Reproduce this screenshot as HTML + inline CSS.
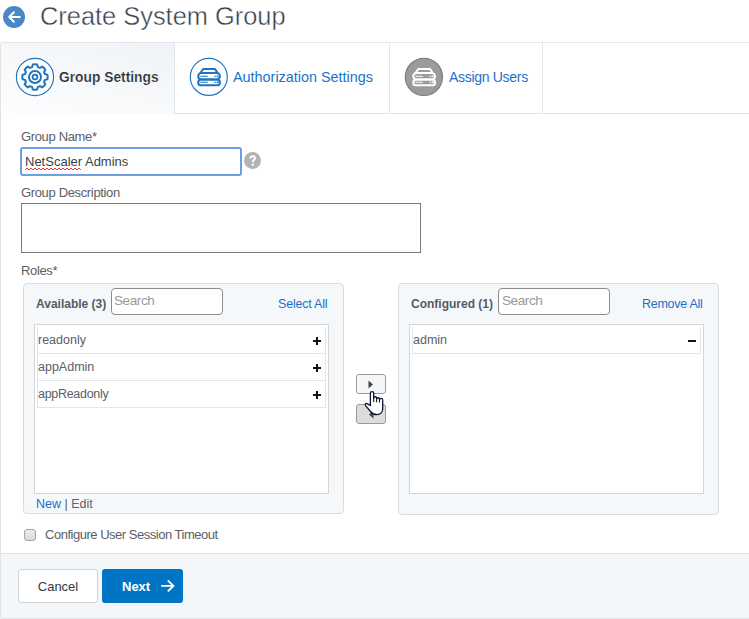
<!DOCTYPE html>
<html><head><meta charset="utf-8">
<style>
*{box-sizing:border-box;}
html,body{margin:0;padding:0;width:749px;height:619px;overflow:hidden;background:#fff;font-family:"Liberation Sans",sans-serif;}
.a{position:absolute;white-space:nowrap;}
#back{left:3px;top:6px;width:22px;height:22px;border-radius:50%;background:#4a87c9;}
#title{left:40px;top:-1px;font-size:25.4px;line-height:34px;color:#343c47;-webkit-text-stroke:0.45px #fff;}
#panel{left:0px;top:42px;width:760px;height:577px;border:1px solid #e3e6ea;border-left-color:#e2e2e2;border-radius:3px 0 0 3px;background:#fff;}
#tab1{left:1px;top:43px;width:173px;height:71px;border-radius:2px 0 0 0;background:linear-gradient(195deg,#eff3f7 0%,#f6f8fa 45%,#fdfdfe 100%);}
.tabline{background:#e1e5ea;}
.lbl{font-size:13px;letter-spacing:-0.35px;color:#5b6066;line-height:16px;}
.link{color:#1c6ec6;}
.circ{border-radius:50%;}
#footer{left:1px;top:553px;width:760px;height:65px;border-radius:0 0 0 2px;background:#f4f7fa;border-top:1px solid #e1e5ea;}
.rpanel{background:#f5f8fb;border:1px solid #d9dbdd;border-radius:4px;}
.list{background:#fff;border:1px solid #d3d5d7;}
.item{border:1px solid #e3e6e9;border-top:none;background:#fff;}
.search{background:#fff;border:1px solid #8c8c8c;border-radius:4px;}
.ph{font-size:13.6px;letter-spacing:-0.45px;color:#9a9a9a;}
.itx{font-size:12.5px;color:#5b6066;}
.hdr{font-size:12px;font-weight:bold;color:#555b62;}
</style></head><body>
<div class="a" id="back">
<svg width="22" height="22" viewBox="0 0 22 22" style="position:absolute;left:0;top:0"><path d="M16.8 11H6.2M10.8 6.3L6.2 11L10.8 15.7" stroke="#fff" stroke-width="2" fill="none" stroke-linecap="round" stroke-linejoin="round"/></svg>
</div>
<div class="a" id="title">Create System Group</div>

<div class="a" id="panel"></div>
<div class="a" id="tab1"></div>
<!-- tab dividers -->
<div class="a tabline" style="left:174px;top:43px;width:1px;height:71px"></div>
<div class="a tabline" style="left:389px;top:43px;width:1px;height:71px"></div>
<div class="a tabline" style="left:542px;top:43px;width:1px;height:71px"></div>
<div class="a tabline" style="left:174px;top:113px;width:575px;height:1px"></div>

<!-- tab1 icon -->
<svg class="a" style="left:14px;top:55px" width="42" height="44" viewBox="0 0 42 44">
 <circle cx="21" cy="22" r="18.6" fill="#fff" stroke="#1f74bf" stroke-width="1.15"/>
 <g transform="translate(21 22)" fill="none" stroke="#1f74bf" stroke-width="2">
  <path d="M-2.87 -9.89L-2.18 -12.51A12.7 12.7 0 0 1 2.18 -12.51L2.87 -9.89A10.3 10.3 0 0 1 4.96 -9.03L7.30 -10.39A12.7 12.7 0 0 1 10.39 -7.30L9.03 -4.96A10.3 10.3 0 0 1 9.89 -2.87L12.51 -2.18A12.7 12.7 0 0 1 12.51 2.18L9.89 2.87A10.3 10.3 0 0 1 9.03 4.96L10.39 7.30A12.7 12.7 0 0 1 7.30 10.39L4.96 9.03A10.3 10.3 0 0 1 2.87 9.89L2.18 12.51A12.7 12.7 0 0 1 -2.18 12.51L-2.87 9.89A10.3 10.3 0 0 1 -4.96 9.03L-7.30 10.39A12.7 12.7 0 0 1 -10.39 7.30L-9.03 4.96A10.3 10.3 0 0 1 -9.89 2.87L-12.51 2.18A12.7 12.7 0 0 1 -12.51 -2.18L-9.89 -2.87A10.3 10.3 0 0 1 -9.03 -4.96L-10.39 -7.30A12.7 12.7 0 0 1 -7.30 -10.39L-4.96 -9.03A10.3 10.3 0 0 1 -2.87 -9.89Z" stroke-linejoin="round"/>
  <circle r="6" />
  <circle r="2.4" stroke-width="1.8"/>
 </g>
</svg>
<div class="a" style="left:59px;top:68px;font-size:13.8px;font-weight:bold;color:#262d36;line-height:20px;-webkit-text-stroke:0.2px #f6f8fa">Group Settings</div>

<!-- tab2 icon -->
<svg class="a" style="left:189px;top:57px" width="40" height="40" viewBox="0 0 40 40">
 <circle cx="19.8" cy="19.9" r="18.5" fill="#fff" stroke="#1f74bf" stroke-width="1.15"/>
 <g fill="none" stroke="#1f74bf" stroke-width="2.1" stroke-linejoin="round">
  <path d="M14.2 12H26L28.6 16H11.4Z"/>
  <rect x="9.2" y="16" width="21.7" height="6.5" rx="3.25"/>
  <rect x="9.2" y="22.5" width="21.7" height="5.8" rx="2.9"/>
 </g>
 <g stroke="#1f74bf" stroke-width="1.1" stroke-linecap="round">
  <path d="M11.6 19.3H18.4M25.6 19.3H27M11.6 25.2H18.4M25.6 25.2H27"/>
 </g>
 <circle cx="28.6" cy="19.3" r="0.85" fill="#1f74bf"/>
 <circle cx="28.6" cy="25.2" r="0.85" fill="#1f74bf"/>
</svg>
<div class="a link" style="left:233px;top:67px;font-size:14.4px;line-height:20px;color:#1a72cc">Authorization Settings</div>

<!-- tab3 icon -->
<svg class="a" style="left:404px;top:57px" width="40" height="40" viewBox="0 0 40 40">
 <circle cx="19.9" cy="19.9" r="18.6" fill="#9b9b9b" stroke="#7a7a7a" stroke-width="1.1"/>
 <g fill="none" stroke="#fff" stroke-width="2.1" stroke-linejoin="round">
  <path d="M14.3 12H26.1L28.7 16H11.5Z"/>
  <rect x="9.3" y="16" width="21.7" height="6.5" rx="3.25"/>
  <rect x="9.3" y="22.5" width="21.7" height="5.8" rx="2.9"/>
 </g>
 <g stroke="#fff" stroke-width="1.1" stroke-linecap="round">
  <path d="M11.7 19.3H18.5M25.7 19.3H27.1M11.7 25.2H18.5M25.7 25.2H27.1"/>
 </g>
 <circle cx="28.7" cy="19.3" r="0.85" fill="#fff"/>
 <circle cx="28.7" cy="25.2" r="0.85" fill="#fff"/>
</svg>
<div class="a link" style="left:449px;top:67px;font-size:14px;letter-spacing:-0.3px;line-height:20px;color:#1a72cc">Assign Users</div>

<!-- form -->
<div class="a lbl" style="left:21px;top:129px">Group Name*</div>
<div class="a" style="left:20px;top:147px;width:222px;height:28.5px;border:2px solid #6e9de6;border-radius:3px;background:#fff"></div>
<div class="a itx" style="left:25px;top:154px;line-height:16px;color:#3a3f45;font-size:13px">NetScaler Admins</div>
<svg class="a" style="left:25px;top:167px" width="57" height="4"><path d="M0 3 l2 -2 l2 2 l2 -2 l2 2 l2 -2 l2 2 l2 -2 l2 2 l2 -2 l2 2 l2 -2 l2 2 l2 -2 l2 2 l2 -2 l2 2 l2 -2 l2 2 l2 -2 l2 2 l2 -2 l2 2 l2 -2 l2 2 l2 -2 l2 2 l2 -2 l2 2" stroke="#f23b3b" stroke-width="1" fill="none"/></svg>
<svg class="a" style="left:244px;top:152px" width="17" height="17" viewBox="0 0 17 17"><circle cx="8.5" cy="8.5" r="8.5" fill="#b3b3b3"/><path d="M6.4 6.6C6.4 5 7.5 4.3 8.7 4.3C10 4.3 11 5.1 11 6.3C11 8 8.8 8.2 8.8 9.9V10.3" stroke="#fff" stroke-width="2" fill="none"/><rect x="7.7" y="11.6" width="2.2" height="2.1" fill="#fff"/></svg>

<div class="a lbl" style="left:21px;top:185px">Group Description</div>
<div class="a" style="left:21px;top:203px;width:400px;height:50px;border:1px solid #7a7a7a;background:#fff"></div>

<div class="a lbl" style="left:21px;top:263px">Roles*</div>

<!-- available panel -->
<div class="a rpanel" style="left:23px;top:283px;width:321px;height:231px"></div>
<div class="a hdr" style="left:36px;top:296px;line-height:16px">Available (3)</div>
<div class="a search" style="left:111px;top:288px;width:112px;height:27px"></div>
<div class="a ph" style="left:114px;top:293px;line-height:16px">Search</div>
<div class="a link" style="left:278px;top:296px;font-size:12.5px;line-height:16px;letter-spacing:-0.2px">Select All</div>
<div class="a list" style="left:34px;top:324px;width:295px;height:170px"></div>
<div class="a item" style="left:37px;top:327px;width:289px;height:27px"></div>
<div class="a item" style="left:37px;top:354px;width:289px;height:27px"></div>
<div class="a item" style="left:37px;top:381px;width:289px;height:27px"></div>
<div class="a itx" style="left:38px;top:332px;line-height:16px">readonly</div>
<div class="a itx" style="left:38px;top:359px;line-height:16px">appAdmin</div>
<div class="a itx" style="left:38px;top:386px;line-height:16px;letter-spacing:-0.3px">appReadonly</div>
<svg class="a" style="left:313px;top:337px" width="8" height="8"><path d="M4 0V8M0 4H8" stroke="#111" stroke-width="2"/></svg>
<svg class="a" style="left:313px;top:364px" width="8" height="8"><path d="M4 0V8M0 4H8" stroke="#111" stroke-width="2"/></svg>
<svg class="a" style="left:313px;top:391px" width="8" height="8"><path d="M4 0V8M0 4H8" stroke="#111" stroke-width="2"/></svg>
<div class="a" style="left:36px;top:496px;font-size:12.5px;line-height:16px;color:#5b6066"><span class="link">New</span> | Edit</div>

<!-- transfer buttons -->
<div class="a" style="left:356px;top:374px;width:30px;height:20px;background:#f4f7fa;border:1px solid #9a9a9a;border-radius:3px"></div>
<svg class="a" style="left:368px;top:380px" width="6" height="9"><path d="M0.5 0.5L5 4.5L0.5 8.5Z" fill="#444"/></svg>
<div class="a" style="left:356px;top:404px;width:30px;height:20px;background:#dcdcdc;border:1px solid #9a9a9a;border-radius:3px"></div>
<svg class="a" style="left:368px;top:410px" width="6" height="9"><path d="M5.5 0.5L1 4.5L5.5 8.5Z" fill="#444"/></svg>

<!-- configured panel -->
<div class="a rpanel" style="left:398px;top:283px;width:321px;height:232px"></div>
<div class="a hdr" style="left:411px;top:296px;line-height:16px">Configured (1)</div>
<div class="a search" style="left:498px;top:288px;width:112px;height:27px"></div>
<div class="a ph" style="left:502px;top:293px;line-height:16px">Search</div>
<div class="a link" style="left:642px;top:296px;font-size:12.5px;line-height:16px;letter-spacing:-0.27px">Remove All</div>
<div class="a list" style="left:409px;top:324px;width:295px;height:170px"></div>
<div class="a item" style="left:412px;top:327px;width:289px;height:27px"></div>
<div class="a itx" style="left:413px;top:332px;line-height:16px">admin</div>
<svg class="a" style="left:688px;top:339px" width="8" height="4"><path d="M0 2H8" stroke="#111" stroke-width="2"/></svg>

<!-- checkbox -->
<div class="a" style="left:24px;top:529px;width:12px;height:12px;background:linear-gradient(#ebebeb,#dadada);border:1px solid #a6a6a6;border-radius:3px"></div>
<div class="a lbl" style="left:45px;top:527px;letter-spacing:-0.48px">Configure User Session Timeout</div>

<!-- footer -->
<div class="a" id="footer"></div>
<div class="a" style="left:18px;top:569px;width:80px;height:34px;background:#fff;border:1px solid #cfd3d7;border-radius:3px;font-size:13px;line-height:34px;text-align:center;color:#333a42">Cancel</div>
<div class="a" style="left:102px;top:569px;width:81px;height:34px;background:#0075c5;border-radius:3px"></div>
<div class="a" style="left:122px;top:579px;font-size:13px;font-weight:bold;line-height:16px;color:#fff">Next</div>
<svg class="a" style="left:160px;top:578px" width="16" height="16"><path d="M1.2 7.9H13.4M7.8 2.4L13.4 7.9L7.8 13.4" stroke="#fff" stroke-width="1.9" fill="none"/></svg>

<!-- cursor -->
<svg class="a" style="left:360px;top:388px" width="26" height="30" viewBox="0 0 26 30">
 <path d="M10.4 15.8V5.2A1.65 1.65 0 0 1 13.7 5.2V10.2A1.45 1.45 0 0 1 16.6 10.2V11.2A1.45 1.45 0 0 1 19.5 11.2V12A1.6 1.6 0 0 1 22.7 12V20.5C22.7 24 20.5 26.6 17 26.6C13.5 26.6 12 25.5 10.5 23.5L5.6 17.6C4.6 16.4 5.6 15 7 15.6L10.4 17.5Z" fill="#fff" stroke="#0d1530" stroke-width="1.3" stroke-linejoin="round"/>
 <path d="M13.7 10.2V14M16.6 11.2V14.2M19.5 12V14.4" stroke="#0d1530" stroke-width="1.1" fill="none"/>
</svg>
</body></html>
